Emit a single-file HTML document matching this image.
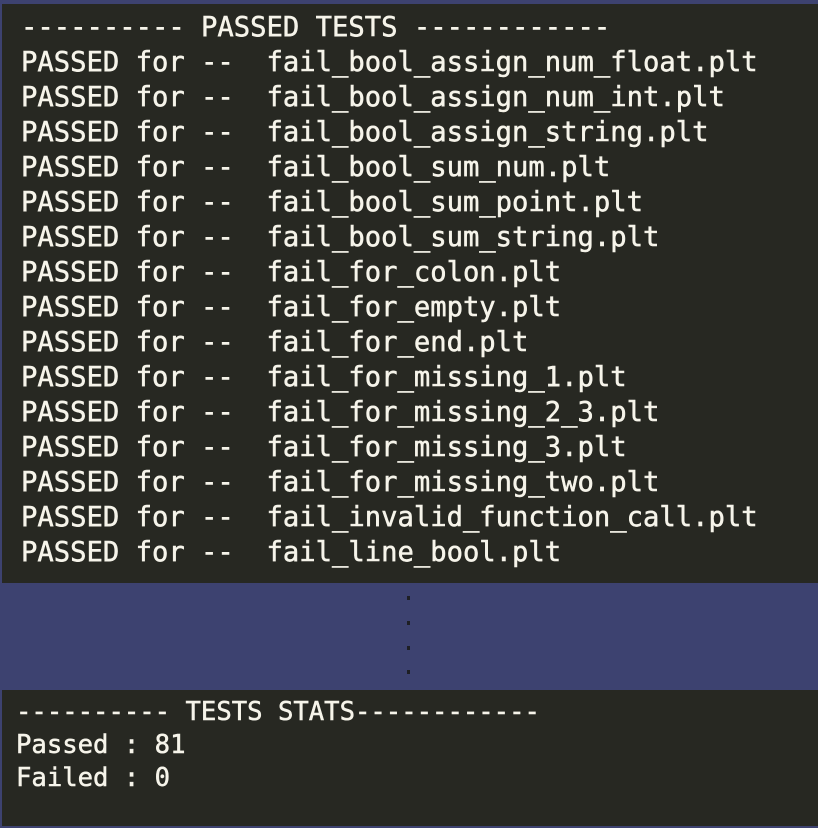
<!DOCTYPE html>
<html><head><style>
html,body{margin:0;padding:0;width:818px;height:828px;background:#3d4270;overflow:hidden}
.p{position:absolute;background:#272822;color:#f6f4ea;font-family:"DejaVu Sans Mono","Liberation Mono",monospace;white-space:pre;-webkit-text-stroke:0.5px #f6f4ea}
#a{left:2px;top:4px;width:816px;height:579px}
#b{left:2px;top:690px;width:816px;height:136px}
.l{position:absolute;font-size:27.2px;line-height:35px}
.s{position:absolute;font-size:25.6px;line-height:33px}
.d{position:absolute;left:407px;width:3px;height:4px;background:#1e1f24}
</style></head><body>
<div class="p" id="a">
<div class="l" style="left:19px;top:6px">---------- PASSED TESTS ------------
PASSED for --  fail_bool_assign_num_float.plt
PASSED for --  fail_bool_assign_num_int.plt
PASSED for --  fail_bool_assign_string.plt
PASSED for --  fail_bool_sum_num.plt
PASSED for --  fail_bool_sum_point.plt
PASSED for --  fail_bool_sum_string.plt
PASSED for --  fail_for_colon.plt
PASSED for --  fail_for_empty.plt
PASSED for --  fail_for_end.plt
PASSED for --  fail_for_missing_1.plt
PASSED for --  fail_for_missing_2_3.plt
PASSED for --  fail_for_missing_3.plt
PASSED for --  fail_for_missing_two.plt
PASSED for --  fail_invalid_function_call.plt
PASSED for --  fail_line_bool.plt</div>
</div>
<div class="d" style="top:596px"></div>
<div class="d" style="top:621px"></div>
<div class="d" style="top:646px"></div>
<div class="d" style="top:670px"></div>
<div class="p" id="b">
<div class="s" style="left:14px;top:6px">---------- TESTS STATS------------
Passed : 81
Failed : 0</div>
</div>
</body></html>
